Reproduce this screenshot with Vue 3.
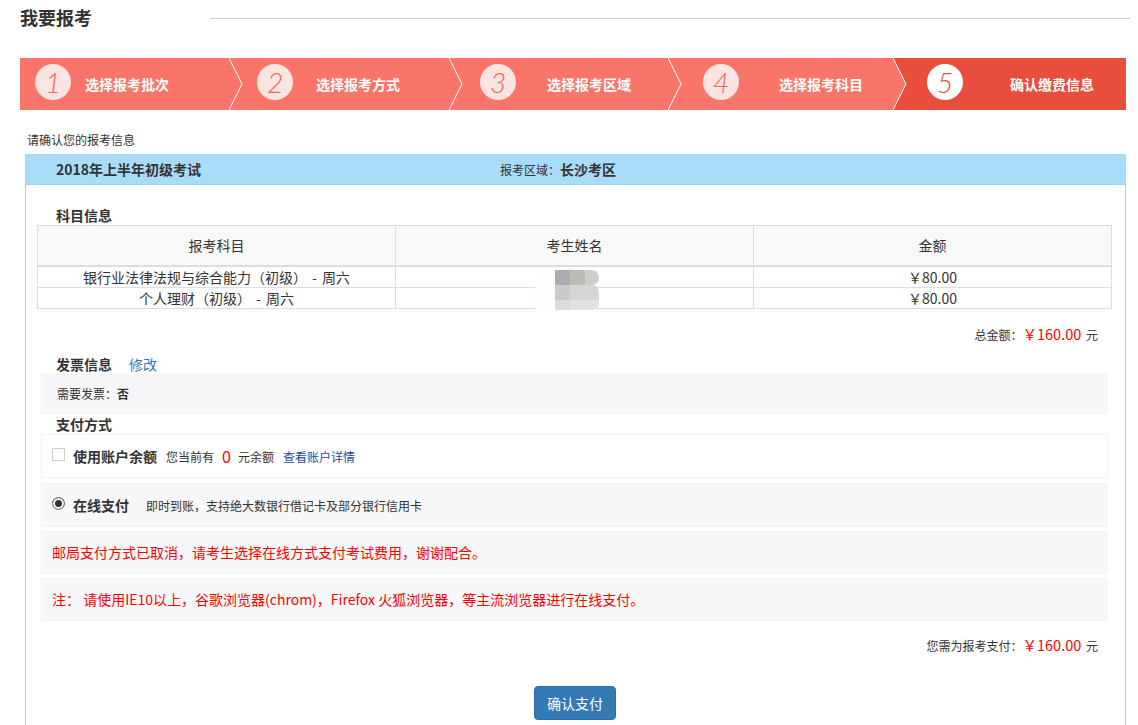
<template>
  <div class="page">
    <div class="head">
      <h2 class="head-title">我要报考</h2>
      <div class="head-line"></div>
    </div>

    <div class="steps">
      <div v-for="(step, i) in steps" :key="step" class="step" :class="{ active: i === steps.length - 1 }">
        <span class="step-num">{{ i + 1 }}</span>
        <span class="step-text">{{ step }}</span>
        <svg v-if="i < steps.length - 1" class="step-arrow" width="16" height="52" viewBox="0 0 16 52">
          <polygon points="0,0 13,26 0,52" fill="#fa7569" />
          <polyline points="0,0 13,26 0,52" fill="none" stroke="#fff" stroke-width="1" />
        </svg>
      </div>
    </div>

    <p class="tip">请确认您的报考信息</p>

    <div class="card">
      <div class="card-head">
        <span class="exam-name">2018年上半年初级考试</span>
        <span class="exam-area">报考区域：<b>长沙考区</b></span>
      </div>

      <div class="card-body">
        <div class="label">科目信息</div>
        <div class="table-wrap">
          <table class="subjects">
            <thead>
              <tr>
                <th>报考科目</th>
                <th>考生姓名</th>
                <th>金额</th>
              </tr>
            </thead>
            <tbody>
              <tr v-for="row in subjects" :key="row">
                <td>{{ row }}</td>
                <td></td>
                <td>￥80.00</td>
              </tr>
            </tbody>
          </table>
          <div class="mosaic">
            <i class="m0"></i><i class="m1"></i><i class="m2"></i><i class="m3"></i>
            <i class="m0"></i><i class="m4"></i><i class="m5"></i><i class="m5 r1"></i>
            <i class="m0"></i><i class="m6"></i><i class="m7"></i><i class="m7 r2"></i>
          </div>
        </div>

        <div class="sum first-sum">总金额：<em>￥160.00</em> 元</div>

        <div class="label invoice-label">发票信息<a class="edit">修改</a></div>
        <div class="box invoice">需要发票：<b>否</b></div>

        <div class="label">支付方式</div>
        <div class="box plain pay">
          <span class="check"></span>
          <strong>使用账户余额</strong>
          <span class="small s-left">您当前有</span>
          <em class="zero">0</em>
          <span class="small">元余额</span>
          <a class="detail">查看账户详情</a>
        </div>
        <div class="box pay online">
          <span class="radio"></span>
          <strong>在线支付</strong>
          <span class="small o-left">即时到账，支持绝大数银行借记卡及部分银行信用卡</span>
        </div>
        <div class="box notice">邮局支付方式已取消，请考生选择在线方式支付考试费用，谢谢配合。</div>
        <div class="box notice">注： 请使用IE10以上，谷歌浏览器(chrom)，Firefox 火狐浏览器，等主流浏览器进行在线支付。</div>

        <div class="sum last-sum">您需为报考支付：<em>￥160.00</em> 元</div>

        <div class="actions">
          <button class="confirm" type="button">确认支付</button>
        </div>
      </div>
    </div>
  </div>
</template>

<script setup>
const steps = ['选择报考批次', '选择报考方式', '选择报考区域', '选择报考科目', '确认缴费信息']
const subjects = ['银行业法律法规与综合能力（初级） - 周六', '个人理财（初级） - 周六']
</script>

<style>
html, body {
  height: 725px;
  overflow: hidden;
  background: #fff;
}
</style>

<style scoped>
.page {
  padding: 0 8px 0 20px;
  font-family: "Noto Sans CJK SC", "Liberation Sans", sans-serif;
  font-size: 12px;
  color: #333;
}

.head {
  display: flex;
  height: 58px;
}
.head-title {
  margin: 6px 0 0 0;
  width: 190px;
  font-size: 18px;
  line-height: 22px;
  font-weight: 700;
}
.head-line {
  flex: 1;
  height: 1px;
  margin: 18px 0 0 0;
  background: #ccc;
}

.steps {
  display: grid;
  grid-template-columns: 209px 220px 219px 225px 233px;
  grid-template-rows: 52px;
  width: 1106px;
  height: 52px;
}
.step {
  position: relative;
  display: flex;
  height: 52px;
  background: #fa7569;
  color: #fff;
}
.step.active {
  background: #e94d3d;
}
.step-num {
  flex: none;
  width: 36px;
  height: 36px;
  margin-top: 6px;
  border-radius: 50%;
  background: #fce4e0;
  color: #f4665a;
  font-family: Lato, "Liberation Sans", sans-serif;
  font-style: italic;
  font-weight: 300;
  font-size: 28px;
  line-height: 36px;
  text-align: center;
}
.active .step-num {
  background: #fff;
  color: #e94d3d;
}
.step-text {
  height: 52px;
  font-size: 14px;
  font-weight: 700;
  line-height: 53px;
}
.step-arrow {
  position: absolute;
  left: 100%;
  top: 0;
  z-index: 1;
}
.step:nth-child(1) .step-num { margin-left: 15px; }
.step:nth-child(1) .step-text { margin-left: 14px; }
.step:nth-child(2) .step-num { margin-left: 28px; }
.step:nth-child(2) .step-text { margin-left: 23px; }
.step:nth-child(3) .step-num { margin-left: 31px; }
.step:nth-child(3) .step-text { margin-left: 31px; }
.step:nth-child(4) .step-num { margin-left: 35px; }
.step:nth-child(4) .step-text { margin-left: 40px; }
.step:nth-child(5) .step-num { margin-left: 34px; }
.step:nth-child(5) .step-text { margin-left: 47px; }

.tip {
  margin: 0 0 0 7px;
  height: 44px;
  padding-top: 21px;
  box-sizing: border-box;
  line-height: 18px;
}

.card {
  margin-left: 5px;
  width: 1101px;
  box-sizing: border-box;
  border: 1px solid #a3d3f3;
  border-top: 0;
}
.card-head {
  display: flex;
  height: 31px;
  margin: 0 -1px;
  padding-left: 31px;
  background: #a9dbfb;
  border-bottom: 1px solid #9dd0f2;
  box-sizing: border-box;
  line-height: 31px;
}
.exam-name {
  width: 444px;
  font-size: 14px;
  font-weight: 700;
}
.exam-area b {
  font-size: 14px;
}
.card-body {
  padding: 20px 13px 20px 11px;
}

.label {
  height: 20px;
  padding-left: 19px;
  font-size: 14px;
  font-weight: 700;
  line-height: 20px;
}
.edit {
  margin-left: 17px;
  font-weight: 400;
  color: #337ab7;
}

.table-wrap {
  position: relative;
}
.subjects {
  width: 1075px;
  border-collapse: collapse;
  table-layout: fixed;
  font-size: 14px;
  text-align: center;
}
.subjects th,
.subjects td {
  border: 1px solid #ddd;
  padding: 0;
  line-height: 20px;
  font-weight: 400;
  word-spacing: 2px;
}
.subjects th {
  height: 37px;
  padding-bottom: 2px;
  background: #f9f9f9;
  border-bottom-width: 2px;
}
.mosaic {
  position: absolute;
  left: 498px;
  top: 45px;
  display: grid;
  grid-template-columns: 20px 15px 15px 14px;
  grid-template-rows: 15px 15px 10px;
  border-radius: 6px;
  overflow: hidden;
}
.m0 { background: #fefdfc; }
.m1 { background: #aeabae; }
.m2 { background: #b9bdb4; }
.m3 { background: #ccd0cd; border-radius: 0 7px 7px 0; }
.m4 { background: #c9cccb; }
.m5 { background: #d5d6d6; }
.m6 { background: #dcdcdc; }
.m7 { background: #e2e2e2; }
.r1 { border-radius: 0 7px 0 0; }
.r2 { border-radius: 0 0 7px 0; }

.sum {
  height: 20px;
  padding-right: 14px;
  text-align: right;
  line-height: 20px;
}
.sum em {
  margin-right: 2px;
  font-style: normal;
  font-size: 14.5px;
  color: #f00;
}
.first-sum {
  margin-top: 15px;
}
.last-sum {
  margin-top: 14px;
}
.invoice-label {
  margin-top: 10px;
}

.box {
  margin: 0 4px;
  box-sizing: border-box;
  border: 1px solid #f3f3f5;
  background: #f8f8fa;
  padding-left: 10px;
}
.invoice {
  height: 40px;
  padding-left: 15px;
  line-height: 38px;
}
.plain {
  background: #fff;
}
.pay {
  display: flex;
  align-items: center;
  height: 44px;
}
.pay strong {
  font-size: 14px;
  margin-left: 8px;
}
.check {
  width: 13px;
  height: 13px;
  box-sizing: border-box;
  border: 1px solid #ccc;
  background: #fff;
  margin-top: -3px;
}
.radio {
  width: 13px;
  height: 13px;
  box-sizing: border-box;
  border: 1px solid #777;
  border-radius: 50%;
  background: #333;
  box-shadow: inset 0 0 0 2px #fff;
  margin-top: -3px;
}
.small {
  font-size: 12px;
}
.s-left {
  margin-left: 9px;
}
.zero {
  margin: 0 7px 0 8px;
  font-style: normal;
  font-size: 16px;
  color: #f00;
}
.detail {
  margin-left: 9px;
  color: #1a4b9b;
}
.o-left {
  margin-left: 17px;
}
.online {
  margin-top: 5px;
}
.notice {
  height: 43px;
  margin-top: 4px;
  color: #f00;
  font-size: 14px;
  line-height: 41px;
}

.actions {
  margin-top: 31px;
  padding-left: 497px;
}
.confirm {
  display: block;
  width: 82px;
  height: 34px;
  border: 1px solid #2e6da4;
  border-radius: 4px;
  background: #337ab7;
  color: #fff;
  font-family: inherit;
  font-size: 14px;
  line-height: 20px;
  padding: 0;
}
</style>
